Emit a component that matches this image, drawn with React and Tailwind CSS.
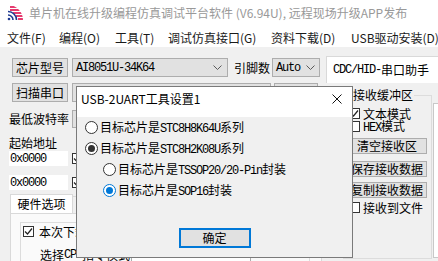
import React from "react";

function M({ children }) {
  return (
    <span className="font-['Liberation_Mono','DejaVu_Sans_Mono',monospace] text-[12px] tracking-[-1.2px]">
      {children}
    </span>
  );
}

function Chevron() {
  return (
    <svg width="9" height="5" viewBox="0 0 9 5" className="shrink-0">
      <path d="M0.5 0.5 L4.5 4.5 L8.5 0.5" fill="none" stroke="#5a5a5a" strokeWidth="1" />
    </svg>
  );
}

function Check({ checked }) {
  return (
    <span className="w-[11px] h-[11px] shrink-0 border border-[#333] bg-white flex items-center justify-center">
      {checked && (
        <svg width="9" height="9" viewBox="0 0 9 9">
          <path d="M1 4.5 L3.5 7 L8 1.5" fill="none" stroke="#222" strokeWidth="1.2" />
        </svg>
      )}
    </span>
  );
}

function Radio({ state }) {
  if (state === "focus") {
    return (
      <span className="w-[13px] h-[13px] shrink-0 rounded-full border border-[#0078d7] bg-white flex items-center justify-center">
        <span className="w-[7px] h-[7px] rounded-full bg-[#0078d7]" />
      </span>
    );
  }
  return (
    <span className="w-[13px] h-[13px] shrink-0 rounded-full border border-[#333] bg-white flex items-center justify-center">
      {state === "on" && <span className="w-[7px] h-[7px] rounded-full bg-[#333]" />}
    </span>
  );
}

function Logo() {
  return (
    <svg width="16" height="16" viewBox="0 0 16 16" className="shrink-0">
      <defs>
        <clipPath id="lc">
          <circle cx="1" cy="15" r="15" />
        </clipPath>
      </defs>
      <g clipPath="url(#lc)" fill="#e63b6f">
        <rect x="3" y="1" width="13" height="2" />
        <rect x="3" y="4" width="13" height="2" />
        <rect x="6" y="7" width="10" height="2" />
        <rect x="9" y="10" width="7" height="2" />
        <rect x="11" y="13" width="5" height="2" />
      </g>
      <g fill="none" stroke="#1f3a93" strokeWidth="1.6">
        <path d="M1 6.5 A8.5 8.5 0 0 1 9.5 15" />
        <path d="M1 10 A5 5 0 0 1 6 15" />
      </g>
      <circle cx="2" cy="14" r="1.3" fill="#1f3a93" />
    </svg>
  );
}

function Opt({ indent, state, children }) {
  return (
    <div className={indent ? "h-[21px] flex items-center pl-[26px] whitespace-nowrap" : "h-[21px] flex items-center pl-[8px] whitespace-nowrap"}>
      <Radio state={state} />
      <span className="ml-[2px]">{children}</span>
    </div>
  );
}

export default function App() {
  return (
    <div className="relative w-[438px] h-[261px] overflow-hidden bg-[#f0f0f0] text-[12px] leading-[14px] text-black font-['Noto_Sans_CJK_SC','Noto_Sans',sans-serif]">
      {/* title bar */}
      <div className="h-[26px] bg-white flex items-center pl-[7px]">
        <Logo />
        <span className="ml-[6px] text-[#999] whitespace-nowrap">
          单片机在线升级编程仿真调试平台软件 (V6.94U), 远程现场升级APP发布
        </span>
      </div>

      {/* menu bar */}
      <div className="h-[21px] bg-white flex items-center pl-[7px] pt-[2px] whitespace-nowrap text-[#1a1a1a]">
        <span className="w-[52px] shrink-0">文件(F)</span>
        <span className="w-[56px] shrink-0">编程(O)</span>
        <span className="w-[53px] shrink-0">工具(T)</span>
        <span className="w-[103px] shrink-0">调试仿真接口(G)</span>
        <span className="w-[80px] shrink-0">资料下载(D)</span>
        <span className="shrink-0">USB驱动安装(D)</span>
      </div>

      {/* body */}
      <div className="flex">
        {/* left column */}
        <div className="w-[326px] shrink-0">
          <div className="mt-[11px] h-[19px] flex items-center">
            <div className="ml-[12px] w-[56px] h-[19px] shrink-0 bg-[#e1e1e1] border border-[#adadad] flex items-center justify-center">
              芯片型号
            </div>
            <div className="ml-[4px] w-[156px] h-[19px] shrink-0 bg-[#e1e1e1] border border-[#adadad] flex items-center justify-between pl-[3px] pr-[5px]">
              <M>AI8051U-34K64</M>
              <Chevron />
            </div>
            <span className="ml-[6px] w-[36px] shrink-0">引脚数</span>
            <div className="ml-[2px] w-[48px] h-[19px] shrink-0 bg-[#e1e1e1] border border-[#adadad] flex items-center justify-between pl-[3px] pr-[4px]">
              <M>Auto</M>
              <Chevron />
            </div>
          </div>

          <div className="mt-[6px] h-[19px] flex items-center">
            <div className="ml-[12px] w-[56px] h-[19px] shrink-0 bg-[#e1e1e1] border border-[#adadad] flex items-center justify-center">
              扫描串口
            </div>
            <div className="ml-[4px] w-[199px] h-[19px] shrink-0 bg-[#e1e1e1] border border-[#adadad] flex items-center justify-end pr-[5px]">
              <Chevron />
            </div>
            <div className="ml-[3px] w-[44px] h-[19px] shrink-0 bg-[#e1e1e1] border border-[#adadad]" />
          </div>

          <div className="mt-[8px] h-[18px] flex items-center">
            <span className="ml-[9px] w-[63px] shrink-0 whitespace-nowrap">最低波特率</span>
            <div className="w-[150px] h-[18px] shrink-0 bg-[#e1e1e1] border border-[#adadad]" />
          </div>

          <div className="mt-[8px] h-[14px] flex items-center">
            <span className="ml-[9px] whitespace-nowrap">起始地址</span>
          </div>

          <div className="mt-[1px] h-[15px] flex items-center">
            <div className="ml-[9px] w-[59px] h-[15px] shrink-0 bg-white flex items-center pl-[1px]">
              <M>0x0000</M>
            </div>
            <span className="ml-[4px]">
              <Check checked />
            </span>
          </div>

          <div className="mt-[9px] h-[15px] flex items-center">
            <div className="ml-[9px] w-[59px] h-[15px] shrink-0 bg-white flex items-center pl-[1px]">
              <M>0x0000</M>
            </div>
            <span className="ml-[4px]">
              <Check checked />
            </span>
          </div>

          <div className="mt-[4px] h-[19px] flex">
            <div className="ml-[10px] w-[63px] shrink-0 bg-white border border-b-0 border-[#d9d9d9] flex items-center justify-center">
              硬件选项
            </div>
            <div className="mt-[2px] w-[60px] shrink-0 border-t border-r border-[#d9d9d9]" />
          </div>
          <div className="ml-[10px] w-[312px] h-[60px] bg-[#fafafa] border border-[#d9d9d9] pt-[8px] pl-[9px]">
            <div className="h-[50px] w-[290px] border border-[#dcdcdc] pl-[2px] pt-[3px]">
              <div className="flex items-center h-[11px] leading-[12px]">
                <Check checked />
                <span className="ml-[5px] whitespace-nowrap">本次下载需要口令</span>
              </div>
              <div className="mt-[12px] h-[12px] leading-[12px] pl-[17px] whitespace-nowrap flex items-start">
                <span>选择</span>
                <M>CPU</M>
                <span>指令模式</span>
                <div className="ml-[1px] w-[120px] h-[18px] bg-white border border-[#adadad]" />
              </div>
            </div>
          </div>
        </div>

        {/* right column */}
        <div className="flex-1 flex flex-col">
          <div className="mt-[9px] h-[27px] bg-white border-l border-t border-[#d9d9d9] flex items-center pl-[6px] whitespace-nowrap">
            <M>CDC/HID-</M>
            <span>串口助手</span>
          </div>
          <div className="flex items-start">
            <div className="relative ml-[17px] mt-[12px] w-[89px] h-[164px] shrink-0 border border-[#dcdcdc] leading-[12px]">
              <span className="absolute left-[9px] -top-[7px] bg-[#f0f0f0] pr-[1px] whitespace-nowrap">
                接收缓冲区
              </span>
              <div className="mt-[11px] h-[13px] flex items-center pl-[5px] whitespace-nowrap">
                <Check checked />
                <span className="ml-[3px]">文本模式</span>
              </div>
              <div className="h-[13px] flex items-center pl-[5px] whitespace-nowrap">
                <Check />
                <span className="ml-[3px]">
                  <M>HEX</M>模式
                </span>
              </div>
              <div className="mt-[5px] ml-[3px] w-[80px] h-[16px] bg-[#e1e1e1] border border-[#adadad] flex items-center justify-center whitespace-nowrap">
                清空接收区
              </div>
              <div className="mt-[7px] ml-[3px] w-[80px] h-[16px] bg-[#e1e1e1] border border-[#adadad] flex items-center justify-center whitespace-nowrap">
                保存接收数据
              </div>
              <div className="mt-[5px] ml-[3px] w-[80px] h-[16px] bg-[#e1e1e1] border border-[#adadad] flex items-center justify-center whitespace-nowrap">
                复制接收数据
              </div>
              <div className="mt-[4px] h-[11px] flex items-center pl-[5px] whitespace-nowrap">
                <Check />
                <span className="ml-[3px]">接收到文件</span>
              </div>
            </div>
            <div className="ml-[1px] mt-[20px] w-[30px] h-[155px] shrink-0 bg-white border border-[#c8c8c8]" />
          </div>
        </div>
      </div>

      {/* dialog */}
      <div className="absolute left-[76px] top-[86px] w-[277px] h-[172px] border border-[#7a7a7a] bg-[#f0f0f0] flex flex-col">
        <div className="h-[30px] shrink-0 bg-white flex items-start justify-between pl-[4px] pr-[10px]">
          <span className="mt-[5px] whitespace-nowrap">USB-2UART工具设置1</span>
          <svg width="10" height="10" viewBox="0 0 10 10" className="mt-[7px]">
            <path d="M0.5 0.5 L9.5 9.5 M9.5 0.5 L0.5 9.5" fill="none" stroke="#111" strokeWidth="1" />
          </svg>
        </div>
        <div className="flex flex-col">
          <Opt state="off">
            目标芯片是<M>STC8H8K64U</M>系列
          </Opt>
          <Opt state="on">
            目标芯片是<M>STC8H2K08U</M>系列
          </Opt>
          <Opt indent state="off">
            目标芯片是<M>TSSOP20/20-Pin</M>封装
          </Opt>
          <Opt indent state="focus">
            目标芯片是<M>SOP16</M>封装
          </Opt>
        </div>
        <div className="mt-[27px] flex justify-center">
          <div className="w-[72px] h-[20px] border-2 border-[#0078d7] bg-[#e1e1e1] flex items-center justify-center">
            确定
          </div>
        </div>
      </div>
    </div>
  );
}
